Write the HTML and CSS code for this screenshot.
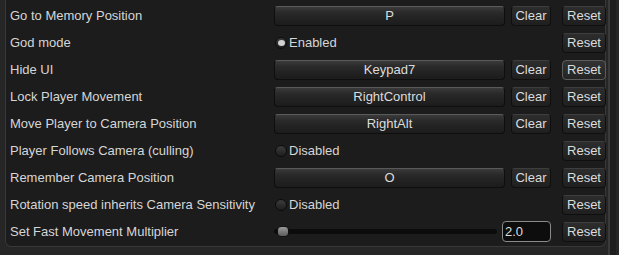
FILE: index.html
```html
<!DOCTYPE html>
<html lang="en">
<head>
  <meta charset="UTF-8" />
  <title>Controls</title>
  <link rel="stylesheet" href="styles.css">
</head>
<body>
  <div class="window">
    <div class="panel">
      <div class="row">
        <span class="label">Go to Memory Position</span>
        <button class="key">P</button>
        <button class="btn clear">Clear</button>
        <button class="btn reset">Reset</button>
      </div>
      <div class="row">
        <span class="label">God mode</span>
        <label class="toggle on"><span class="dot"></span>Enabled</label>
        <button class="btn reset">Reset</button>
      </div>
      <div class="row">
        <span class="label">Hide UI</span>
        <button class="key">Keypad7</button>
        <button class="btn clear">Clear</button>
        <button class="btn reset hover">Reset</button>
      </div>
      <div class="row">
        <span class="label">Lock Player Movement</span>
        <button class="key">RightControl</button>
        <button class="btn clear">Clear</button>
        <button class="btn reset">Reset</button>
      </div>
      <div class="row">
        <span class="label">Move Player to Camera Position</span>
        <button class="key">RightAlt</button>
        <button class="btn clear">Clear</button>
        <button class="btn reset">Reset</button>
      </div>
      <div class="row">
        <span class="label">Player Follows Camera (culling)</span>
        <label class="toggle"><span class="dot"></span>Disabled</label>
        <button class="btn reset">Reset</button>
      </div>
      <div class="row">
        <span class="label">Remember Camera Position</span>
        <button class="key">O</button>
        <button class="btn clear">Clear</button>
        <button class="btn reset">Reset</button>
      </div>
      <div class="row">
        <span class="label">Rotation speed inherits Camera Sensitivity</span>
        <label class="toggle"><span class="dot"></span>Disabled</label>
        <button class="btn reset">Reset</button>
      </div>
      <div class="row">
        <span class="label">Set Fast Movement Multiplier</span>
        <div class="range">
          <div class="slider"><span class="thumb"></span></div>
          <input class="num" type="text" value="2.0" />
        </div>
        <button class="btn reset">Reset</button>
      </div>
    </div>
    <div class="scrollbar"></div>
  </div>
</body>
</html>
```

FILE: styles.css
```css
body {
  margin: 0;
  background: #262626;
  font-family: "Liberation Sans", Arial, sans-serif;
  font-size: 13px;
  color: #d6d6d6;
  overflow: hidden;
}

.window {
  display: flex;
  height: 255px;
}

.panel {
  margin-left: 5px;
  width: 601px;
  height: 247px;
  padding: 2px 0 0 4px;
  background: #1c1c1c;
  border: 1px solid #383838;
  border-top: none;
  border-radius: 0 0 6px 6px;
  box-sizing: border-box;
  align-self: flex-start;
}

.scrollbar {
  margin-left: 2px;
  width: 6px;
  background: #1e1e1e;
  border-left: 2px solid #3a3a3a;
}

.row {
  display: grid;
  grid-template-columns: 264px 231px 6px 40px 11px 44px;
  align-items: center;
  height: 27px;
}

.label {
  grid-column: 1;
  white-space: nowrap;
}

button {
  font-family: inherit;
  font-size: 13px;
  color: #dcdcdc;
  cursor: pointer;
  padding: 0;
}

.key {
  grid-column: 2;
  height: 20px;
  border: 1px solid #0e0e0e;
  border-top-color: #5a5a5a;
  border-radius: 4px;
  background: linear-gradient(#3a3a3a, #2a2a2a 30%, #232323 60%, #1c1c1c);
}

.btn {
  height: 20px;
  border: 1px solid #0f0f0f;
  border-top-color: #3e3e3e;
  border-radius: 4px;
  background: linear-gradient(#2d2d2d, #1f1f1f);
}

.clear {
  grid-column: 4;
}

.reset {
  grid-column: 6;
}

.reset.hover {
  border-color: #5c5c5c;
  background: linear-gradient(#333, #242424);
}

.toggle {
  grid-column: 2;
  display: flex;
  align-items: center;
  gap: 2px;
  padding-left: 1px;
}

.dot {
  width: 12px;
  height: 12px;
  box-sizing: border-box;
  border-radius: 50%;
  border: 1px solid #0c0c0c;
  background: linear-gradient(#3c3c3c, #1e1e1e);
  display: flex;
  align-items: center;
  justify-content: center;
}

.toggle.on .dot::after {
  content: "";
  width: 7px;
  height: 6px;
  border-radius: 50%;
  background: #d2d2d2;
}

.range {
  grid-column: 2 / 5;
  display: flex;
  align-items: center;
  justify-content: space-between;
}

.slider {
  position: relative;
  width: 223px;
  height: 5px;
  background: #0c0c0c;
  border-radius: 3px;
}

.thumb {
  position: absolute;
  left: 3px;
  top: -3px;
  width: 12px;
  height: 11px;
  border-radius: 4px;
  background: linear-gradient(#9a9a9a, #5c5c5c);
  border: 1px solid #111;
  box-sizing: border-box;
}

.num {
  width: 49px;
  height: 21px;
  box-sizing: border-box;
  background: #0d0d0d;
  border: 1px solid #8a8a8a;
  border-radius: 4px;
  color: #dcdcdc;
  font-family: inherit;
  font-size: 13px;
  padding: 0 2px;
}
```
